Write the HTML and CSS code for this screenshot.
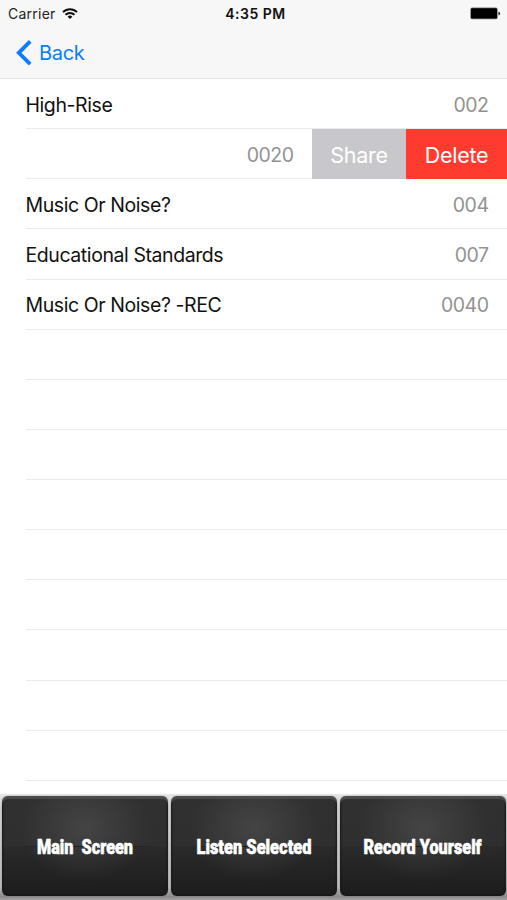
FILE: index.html
```
<!DOCTYPE html>
<html lang="en">
<head>
    <meta charset="UTF-8">
    <meta name="viewport" content="width=device-width, initial-scale=1.0">
    <title>Recordings</title>
    <link rel="stylesheet" href="styles.css">
</head>
<body>
    <header class="header">
        <div class="status-bar">
            <div class="carrier">
                <span class="carrier-name">Carrier</span>
                <svg class="wifi" width="16" height="12" viewBox="0 0 16 12" fill="none" stroke="#111" stroke-width="1.9">
                    <path d="M1 4.1a10 10 0 0 1 14 0"/>
                    <path d="M3.5 6.8a6.4 6.4 0 0 1 9 0"/>
                    <path d="M8 11.1L5.6 8.7a3.4 3.4 0 0 1 4.8 0z" fill="#111" stroke="none"/>
                </svg>
            </div>
            <span class="time">4:35 PM</span>
            <svg class="battery" width="31" height="13" viewBox="0 0 31 13">
                <rect x="0.3" y="0.5" width="27.4" height="11.8" rx="2" fill="#777"/>
                <rect x="1" y="1.2" width="26" height="10.4" rx="1.2" fill="#000"/>
                <path d="M28.5 4.4q1.6.6 1.6 2t-1.6 2z" fill="#222"/>
            </svg>
        </div>
        <div class="nav-bar">
            <svg class="chevron" width="16" height="26" viewBox="0 0 16 26" fill="none" stroke="#0a7cff" stroke-width="3.8">
                <path d="M14.2 1.4L2.8 12.8l11.4 11.4"/>
            </svg>
            <span class="back">Back</span>
        </div>
    </header>

    <main class="list">
        <div class="row"><span class="title">High-Rise</span><span class="number">002</span></div>
        <div class="row swiped">
            <span class="number">0020</span>
            <button class="action share">Share</button>
            <button class="action delete">Delete</button>
        </div>
        <div class="row"><span class="title">Music Or Noise?</span><span class="number">004</span></div>
        <div class="row"><span class="title">Educational Standards</span><span class="number">007</span></div>
        <div class="row"><span class="title">Music Or Noise? -REC</span><span class="number">0040</span></div>
        <div class="row"></div>
        <div class="row"></div>
        <div class="row"></div>
        <div class="row"></div>
        <div class="row"></div>
        <div class="row"></div>
        <div class="row"></div>
        <div class="row"></div>
        <div class="row"></div>
    </main>

    <footer class="toolbar">
        <button class="tool">
            <svg width="166" height="100" viewBox="0 0 166 100"><text x="35" y="58" textLength="96" lengthAdjust="spacingAndGlyphs">Main&#160; Screen</text></svg>
        </button>
        <button class="tool">
            <svg width="166" height="100" viewBox="0 0 166 100"><text x="25.5" y="58" textLength="115" lengthAdjust="spacingAndGlyphs">Listen Selected</text></svg>
        </button>
        <button class="tool">
            <svg width="166" height="100" viewBox="0 0 166 100"><text x="23.5" y="58" textLength="118" lengthAdjust="spacingAndGlyphs">Record Yourself</text></svg>
        </button>
    </footer>
</body>
</html>
```
FILE: styles.css
```
* {
    box-sizing: border-box;
}

body {
    margin: 0;
    height: 900px;
    display: flex;
    flex-direction: column;
    overflow: hidden;
    background-color: #fff;
    font-family: Inter, "Liberation Sans", sans-serif;
    color: #111;
}

button {
    border: none;
    padding: 0;
    font-family: inherit;
}

.header {
    height: 79px;
    flex: none;
    background-color: #f7f7f7;
    border-bottom: 1px solid #e2e2e2;
}

.status-bar {
    display: grid;
    grid-template-columns: 1fr auto 1fr;
    align-items: center;
    height: 27px;
    padding: 0 6px 0 8px;
}

.carrier {
    display: flex;
    align-items: center;
    gap: 6px;
    font-size: 14px;
    letter-spacing: 0.25px;
    color: #222;
}

.carrier-name {
    width: 48px;
}

.time {
    padding-left: 2px;
    font-size: 14px;
    font-weight: 600;
    letter-spacing: 0.5px;
}

.battery {
    justify-self: end;
}

.nav-bar {
    display: flex;
    align-items: center;
    gap: 7px;
    height: 51px;
    padding-left: 16px;
}

.back {
    font-size: 20px;
    color: #0a7cff;
    letter-spacing: -0.3px;
}

.list {
    flex: 1;
    min-height: 0;
    overflow: hidden;
}

.row {
    display: flex;
    align-items: center;
    justify-content: space-between;
    height: 50.14px;
    margin-left: 25.5px;
    padding: 2px 18.5px 0 0;
    border-bottom: 1px solid #ebebeb;
}

.title {
    font-size: 19.5px;
    letter-spacing: -0.42px;
}

.number {
    margin-left: auto;
    font-size: 19.5px;
    letter-spacing: -0.5px;
    color: #929292;
}

.swiped {
    padding: 0;
    align-items: stretch;
}

.swiped .number {
    align-self: center;
    padding: 2px 18.5px 0 0;
}

.action {
    height: 50.14px;
    padding-top: 1px;
    font-size: 21.5px;
    letter-spacing: -0.3px;
    color: #fff;
}

.share {
    width: 94px;
    background-color: #c7c7cc;
}

.delete {
    width: 101px;
    background-color: #ff3b30;
}

.toolbar {
    display: flex;
    justify-content: center;
    gap: 3px;
    flex: none;
    height: 106px;
    padding-top: 2px;
    background: linear-gradient(#e6e6e6, #d0d0d0 12%, #b8b8b8 88%, #8c8a8b 97%, #a5a3a4);
}

.tool {
    width: 166px;
    height: 100px;
    border-radius: 6px;
    background:
        linear-gradient(90deg, transparent 6%, #1e1e1e 25%, #1e1e1e 75%, transparent 94%) 0 50px / 100% 1px no-repeat,
        radial-gradient(ellipse 65px 55px at 50% 32%, rgba(255, 255, 255, 0.1), transparent),
        linear-gradient(#303030 0%, #2f2f2f 50%, #2a2a2a 51%, #1c1c1c 100%);
    box-shadow: inset 0 3px 1px #4c4c4c, inset 0 0 2px 1px #151515, 0 0 1px #444;
}

.tool svg {
    display: block;
    overflow: visible;
}

.tool text {
    font-family: Roboto, sans-serif;
    font-size: 20.5px;
    font-weight: 900;
    fill: #fff;
    stroke: #fff;
    stroke-width: 0.6px;
}
```
